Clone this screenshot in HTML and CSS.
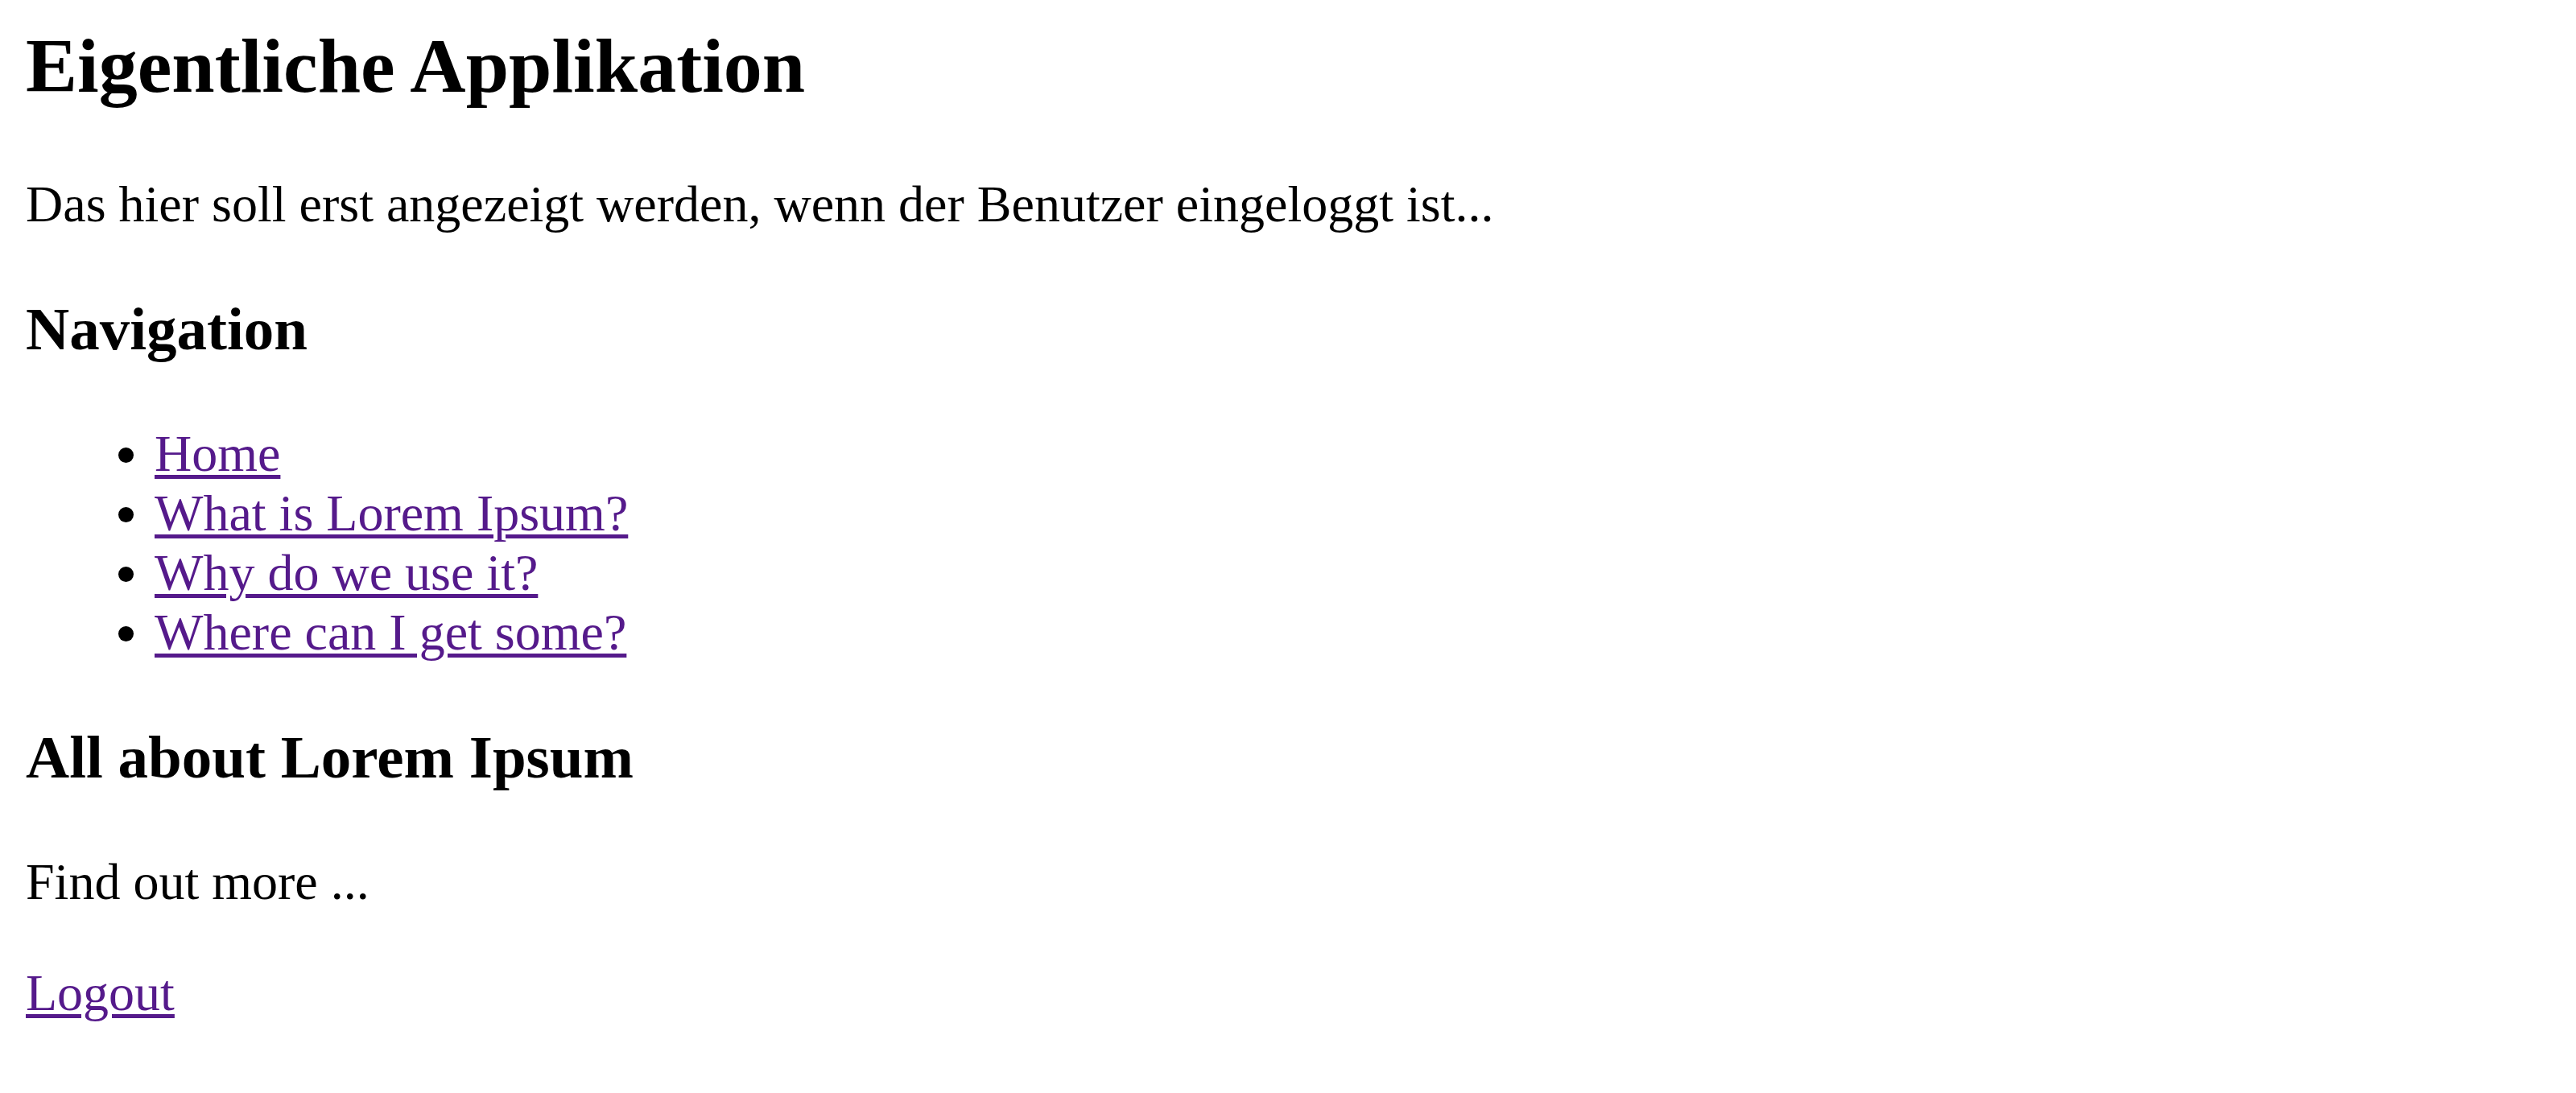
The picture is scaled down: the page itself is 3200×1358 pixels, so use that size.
FILE: index.html
```html
<!DOCTYPE html>
<html lang="de">
<head>
<meta charset="utf-8">
<title>Eigentliche Applikation</title>
<link rel="stylesheet" href="styles.css">
</head>
<body class="page">
<section class="app">
  <h1 class="app-title">Eigentliche Applikation</h1>
  <p class="text">Das hier soll erst angezeigt werden, wenn der Benutzer eingeloggt ist...</p>
  <h3 class="section-title">Navigation</h3>
  <ul class="nav-list">
    <li class="nav-item"><a class="link" href="#home">Home</a></li>
    <li class="nav-item"><a class="link" href="#what">What is Lorem Ipsum?</a></li>
    <li class="nav-item"><a class="link" href="#why">Why do we use it?</a></li>
    <li class="nav-item"><a class="link" href="#where">Where can I get some?</a></li>
  </ul>
  <h3 class="section-title">All about Lorem Ipsum</h3>
  <p class="text">Find out more ...</p>
  <p class="text"><a class="link" href="#logout">Logout</a></p>
</section>
</body>
</html>
```
FILE: styles.css
```css
html {
  background: #ffffff;
}
.page {
  margin: 26px 32px 32px 32px;
  font-family: "Liberation Serif", "Times New Roman", serif;
  font-size: 64px;
  color: #000000;
  background: #ffffff;
}
.app {
  display: block;
}
.app-title {
  font-size: 96px;
  font-weight: bold;
  margin: 0 0 80px 0;
}
.text {
  margin: 64px 0;
}
.section-title {
  font-size: 75px;
  font-weight: bold;
  margin: 75px 0;
}
.nav-list {
  list-style: disc;
  margin: 64px 0;
  padding-left: 160px;
}
.nav-item {
  display: list-item;
}
.link {
  color: #551a8b;
  text-decoration: underline;
  text-decoration-thickness: 5px;
  text-underline-offset: 5px;
}
```
